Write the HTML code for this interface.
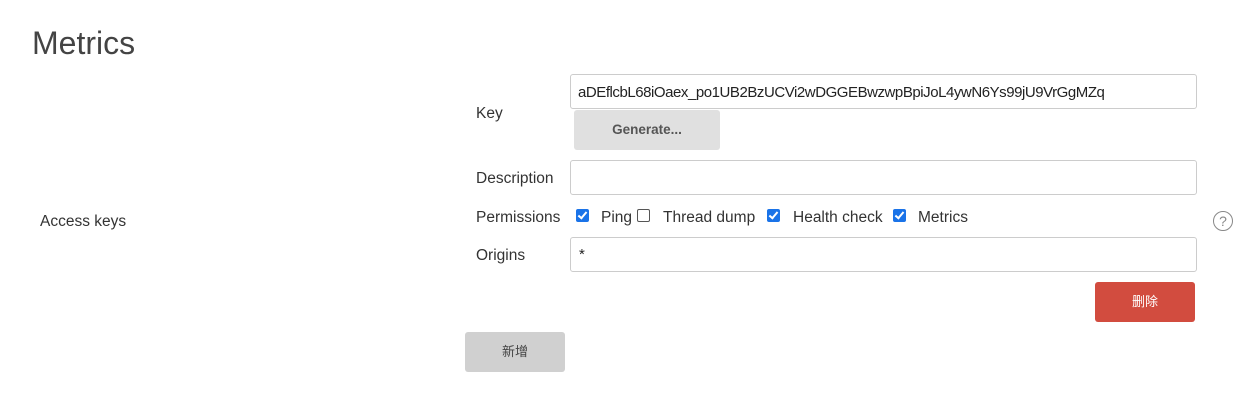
<!DOCTYPE html>
<html><head><meta charset="utf-8"><style>
body{margin:0;width:1233px;height:410px;background:#fff;font-family:"Liberation Sans","Noto Sans CJK SC",sans-serif;color:#333;position:relative;overflow:hidden}
.a{position:absolute;white-space:nowrap}
.lbl{font-size:15.5px;color:#333}
.inp{position:absolute;left:570px;width:625px;height:33px;border:1px solid #ccc;border-radius:3px;background:#fff}
.cb{position:absolute;width:13px;height:13px;border-radius:2px;top:209px}
.on{background:#1a73e8}
.on:after{content:"";position:absolute;left:4px;top:1px;width:3px;height:7px;border:solid #fff;border-width:0 2px 2px 0;transform:rotate(40deg)}
.off{border:1px solid #555;width:11px;height:11px;background:#fff}
</style></head><body>
<div class="a" style="left:32px;top:25px;font-size:32px;color:#444">Metrics</div>
<div class="a lbl" style="left:40px;top:213px">Access keys</div>
<div class="a lbl" style="left:476px;top:105px">Key</div>
<div class="inp" style="top:74px"></div>
<div class="a" style="left:578px;top:84px;font-size:15px;letter-spacing:-0.45px;color:#222">aDEflcbL68iOaex_po1UB2BzUCVi2wDGGEBwzwpBpiJoL4ywN6Ys99jU9VrGgMZq</div>
<div class="a" style="left:574px;top:110px;width:146px;height:40px;background:#e0e0e0;border-radius:3px;font-size:13.5px;font-weight:bold;color:#555;text-align:center;line-height:40px">Generate...</div>
<div class="a lbl" style="left:476px;top:170px">Description</div>
<div class="inp" style="top:160px"></div>
<div class="a lbl" style="left:476px;top:209px">Permissions</div>
<div class="cb on" style="left:576px"></div>
<div class="a lbl" style="left:601px;top:209px">Ping</div>
<div class="cb off" style="left:637px"></div>
<div class="a lbl" style="left:663px;top:209px">Thread dump</div>
<div class="cb on" style="left:767px"></div>
<div class="a lbl" style="left:793px;top:209px">Health check</div>
<div class="cb on" style="left:893px"></div>
<div class="a lbl" style="left:918px;top:209px">Metrics</div>
<div class="a" style="left:1213px;top:211px;width:18px;height:18px;border:1.5px solid #888;border-radius:50%;color:#888;font-size:14px;text-align:center;line-height:18px">?</div>
<div class="a lbl" style="left:476px;top:247px">Origins</div>
<div class="inp" style="top:237px"></div>
<div class="a" style="left:579px;top:246px;font-size:15px;color:#222">*</div>
<div class="a" style="left:1095px;top:282px;width:100px;height:40px;background:#d24c3f;border-radius:3px;color:#fff;font-size:13px;text-align:center;line-height:40px">删除</div>
<div class="a" style="left:465px;top:332px;width:100px;height:40px;background:#d0d0d0;border-radius:3px;color:#444;font-size:13px;text-align:center;line-height:40px">新增</div>
</body></html>
